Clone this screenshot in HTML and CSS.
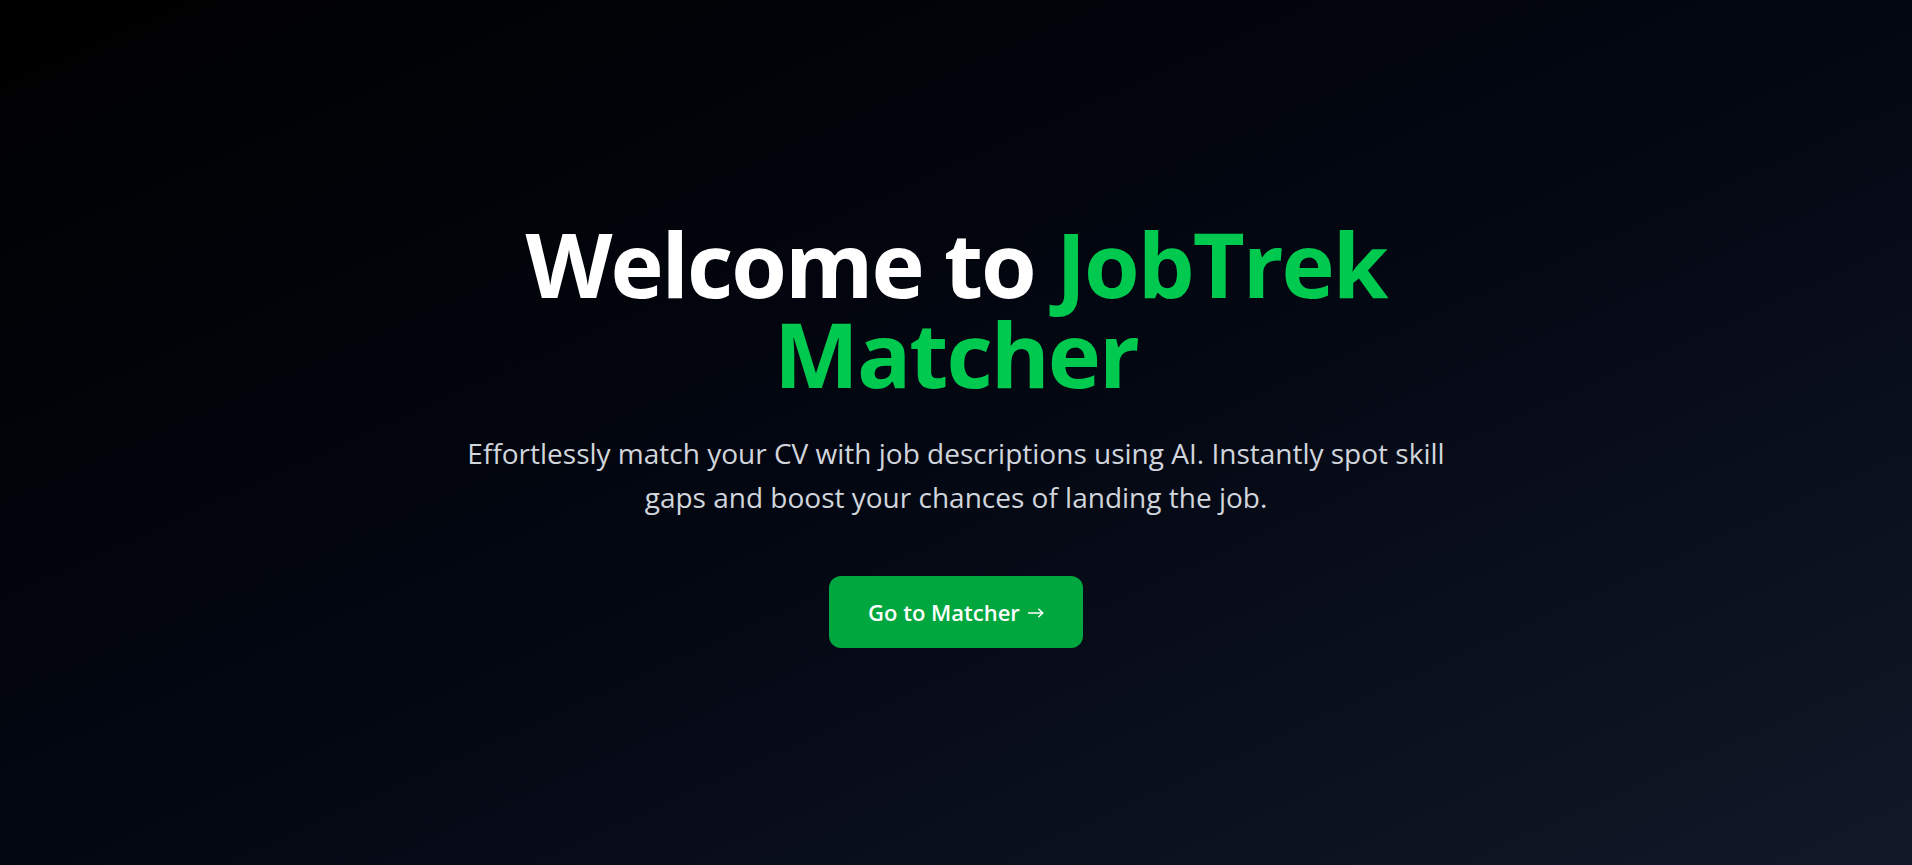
FILE: index.html
```html
<!DOCTYPE html>
<html lang="en">
<head>
<meta charset="utf-8">
<title>JobTrek Matcher</title>
<link rel="stylesheet" href="styles.css">
</head>
<body>
<main class="hero">
  <h1 class="hero-title"><span class="word">Welcome to</span> <span class="word accent">JobTrek</span> <span class="word accent">Matcher</span></h1>
  <p class="hero-text">Effortlessly match your CV with job descriptions using AI. Instantly spot skill gaps and boost your chances of landing the job.</p>
  <a class="hero-btn" href="#">Go to Matcher<svg class="arrow" width="16" height="10" viewBox="0 0 16 10" aria-hidden="true"><path d="M0.5 5H14.8M10.8 1.2L14.8 5L10.8 8.8" fill="none" stroke="#ffffff" stroke-width="1.5" stroke-linecap="round" stroke-linejoin="round"/></svg></a>
</main>
</body>
</html>
```
FILE: styles.css
```css
html, body {
  margin: 0;
  padding: 0;
  height: 100%;
}
body {
  font-family: "Open Sans", "Noto Sans", sans-serif;
  background: linear-gradient(to bottom right, #000000 0%, #030712 50%, #111827 100%);
  color: #fff;
}
.hero {
  min-height: 100vh;
  box-sizing: border-box;
  display: flex;
  flex-direction: column;
  align-items: center;
  justify-content: center;
  text-align: center;
  padding: 0 24px;
}
.hero-title {
  margin: 0;
  font-size: 90px;
  line-height: 90px;
  font-weight: 700;
  letter-spacing: -2px;
  max-width: 1000px;
  color: #ffffff;
}
.word {
  display: inline-block;
  height: 90px;
  vertical-align: top;
  overflow: visible;
}
.accent {
  color: #00c950;
}
.hero-text {
  margin: 33px 0 0;
  max-width: 1024px;
  font-size: 28px;
  line-height: 44px;
  color: #d1d5dc;
}
.hero-btn {
  margin-top: 57px;
  display: inline-flex;
  align-items: center;
  gap: 8px;
  background: #00a63e;
  color: #fff;
  text-decoration: none;
  font-size: 22px;
  line-height: 32px;
  font-weight: 600;
  padding: 20px 39px;
  border-radius: 12px;
}
.arrow {
  display: block;
  margin-top: 2px;
}
```
